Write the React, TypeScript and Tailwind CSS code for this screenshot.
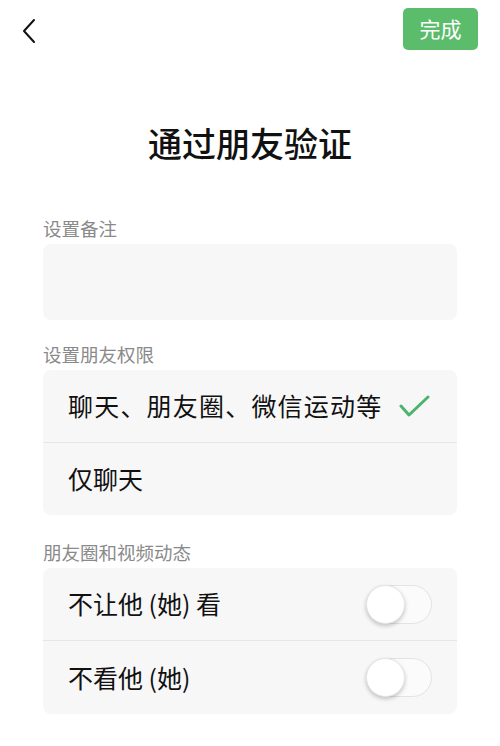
import React from "react";

const font = { fontFamily: '"Noto Sans CJK SC", "Noto Sans", sans-serif' };

function Toggle() {
  return (
    <div className="relative h-[39px] w-[66px] rounded-full border border-[#e3e3e3] bg-[#fbfbfb]">
      <div className="absolute left-[-1px] top-[-1px] h-[39px] w-[39px] rounded-full border border-[#e6e6e6] bg-white shadow-[0_2px_4px_rgba(0,0,0,0.22)]" />
    </div>
  );
}

export default function App() {
  return (
    <div className="min-h-[746px] w-[500px] bg-white" style={font}>
      <div className="flex h-[58px] items-start justify-between pl-[20px] pr-[22px] pt-[8px]">
        <svg width="18" height="26" viewBox="0 0 18 26" className="mt-[10px]">
          <path d="M14 2 L4 13 L14 24" fill="none" stroke="#111" strokeWidth="2" strokeLinecap="round" strokeLinejoin="round" />
        </svg>
        <div className="flex h-[42px] w-[75px] items-center justify-center rounded-[5px] bg-[#5bbd6c] text-[21px] text-white">
          完成
        </div>
      </div>

      <div className="mt-[68px] text-center text-[34px] font-medium leading-[34px] text-[#111]">
        通过朋友验证
      </div>

      <div className="mx-[43px]">
        <div className="mt-[59px] text-[18.5px] leading-[18px] text-[#8a8a8a]">设置备注</div>
        <div className="mt-[7px] h-[76px] rounded-[8px] bg-[#f7f7f7]" />

        <div className="mt-[25px] text-[18.5px] leading-[18px] text-[#8a8a8a]">设置朋友权限</div>
        <div className="mt-[7px] overflow-hidden rounded-[8px] bg-[#f7f7f7]">
          <div className="flex h-[72px] items-center justify-between pl-[25px] pr-[27px] text-[25px] text-[#111]">
            <span className="tracking-[1.2px]">聊天、朋友圈、微信运动等</span>
            <svg width="32" height="24" viewBox="0 0 32 24">
              <path d="M3 12 L11 21 L30 3" fill="none" stroke="#4cb46c" strokeWidth="3" strokeLinecap="round" strokeLinejoin="round" />
            </svg>
          </div>
          <div className="h-px bg-[#e6e6e6]" />
          <div className="flex h-[72px] items-center pl-[25px] text-[25px] text-[#111]">仅聊天</div>
        </div>

        <div className="mt-[28px] text-[18.5px] leading-[18px] text-[#8a8a8a]">朋友圈和视频动态</div>
        <div className="mt-[7px] overflow-hidden rounded-[8px] bg-[#f7f7f7]">
          <div className="flex h-[72px] items-center justify-between pl-[25px] pr-[25px] text-[25px] text-[#111]">
            <span>不让他 (她) 看</span>
            <Toggle />
          </div>
          <div className="h-px bg-[#e6e6e6]" />
          <div className="flex h-[73px] items-center justify-between pl-[25px] pr-[25px] text-[25px] text-[#111]">
            <span>不看他 (她)</span>
            <Toggle />
          </div>
        </div>
      </div>
    </div>
  );
}
